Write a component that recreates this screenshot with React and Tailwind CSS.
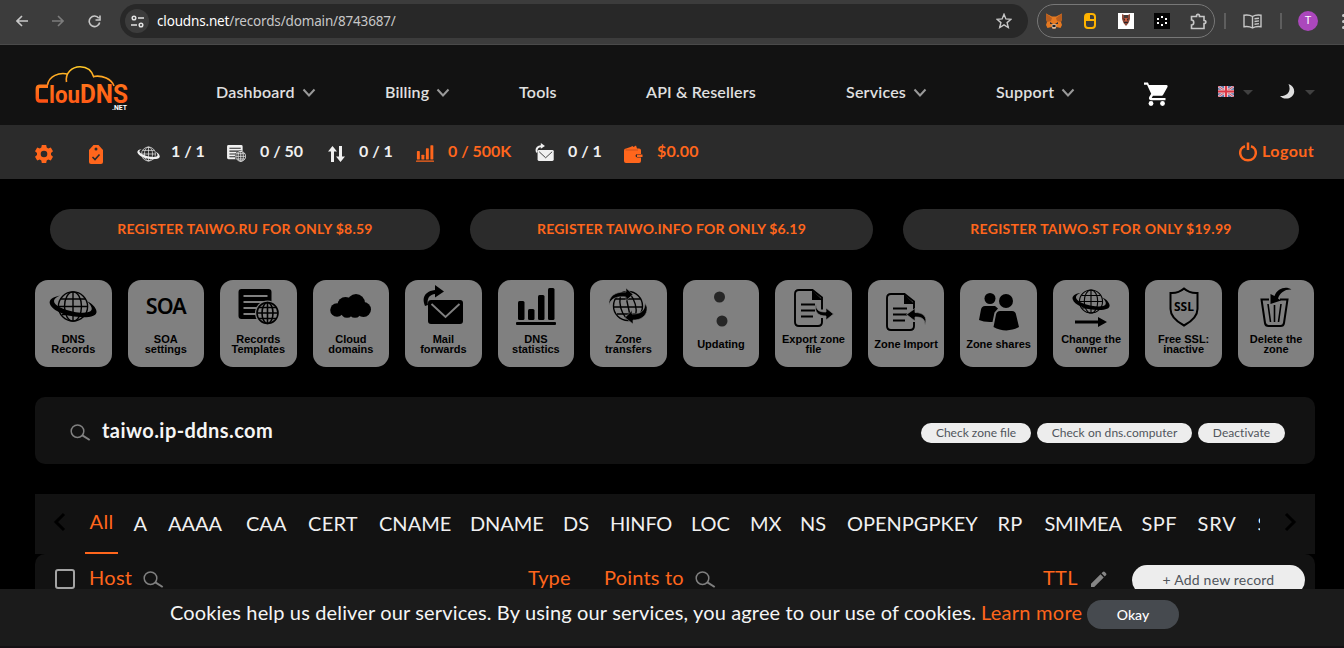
import React from "react";

function Stroke({ children, className = "", ...p }) {
  return (
    <svg className={"block shrink-0 " + className} fill="none" stroke="currentColor" {...p}>
      {children}
    </svg>
  );
}

const Chevron = () => (
  <Stroke width="14" height="10" viewBox="0 0 14 10" strokeWidth="2" className="ml-[7px] mt-px text-[#999999]">
    <path d="M1.500 1.500 7 7.500 12.500 1.500" />
  </Stroke>
);

const Caret = ({ className }) => (
  <svg width="10" height="5" viewBox="0 0 10 5" className={"block shrink-0 text-[#404040] " + className}>
    <path d="M0 0h10L5 5z" fill="currentColor" />
  </svg>
);

function Globe({ className = "", w, h }) {
  return (
    <svg viewBox="0 0 48 31" width={w} height={h} className={"block shrink-0 " + className} fill="none" stroke="currentColor">
      <g strokeWidth="1.400">
        <circle cx="24" cy="15.500" r="14.600" />
        <ellipse cx="24" cy="15.500" rx="8.500" ry="14.600" />
        <path d="M24 1v29M10 15.500h28M12 8h24M13 23.500h22" />
      </g>
      <path d="M11 4.500C3 6 0 9 .8 12.500 3 20 18 26 34 26.200c9 0 14-2 13.500-6C47 16.500 43 12.500 38.500 10.500c3 3.500 5 6 4 8.500-1.500 3-9 3.500-18 1.800C14 18.500 5 14.500 5 10c0-2 2.500-4 6-5.500z" fill="currentColor" stroke="none" />
    </svg>
  );
}

function Template({ className = "", w, h, bg = "#808080" }) {
  return (
    <svg viewBox="0 0 40 36" width={w} height={h} className={"block shrink-0 " + className}>
      <path d="M3 0h27a3 3 0 0 1 3 3v12H21v15H3a3 3 0 0 1-3-3V3a3 3 0 0 1 3-3z" fill="currentColor" />
      <path d="M5 7h24M5 13h24M5 19h15M5 25h13" stroke={bg} strokeWidth="2.200" />
      <circle cx="29" cy="24" r="12.500" fill={bg} />
      <g fill="none" stroke="currentColor" strokeWidth="1.600">
        <circle cx="29" cy="24" r="10.500" />
        <ellipse cx="29" cy="24" rx="5.500" ry="10.500" />
        <path d="M29 13.500v21M18.500 24h21M20.500 18.500h17M20.500 29.500h17" />
      </g>
    </svg>
  );
}

function Mail({ className = "", w, h, bg = "#808080" }) {
  return (
    <svg viewBox="0 0 40 39" width={w} height={h} className={"block shrink-0 " + className}>
      <path d="M2 21C-2 12 3 6 12 5V0l9 6.500-9 6V9C7 9.500 3.500 13 5 20z" fill="currentColor" />
      <rect x="5" y="15" width="35" height="24" rx="3" fill="currentColor" />
      <path d="M8.500 19 22.500 32 36.500 19" fill="none" stroke={bg} strokeWidth="1.900" />
    </svg>
  );
}

function Bars({ className = "", w, h }) {
  return (
    <svg viewBox="0 0 40 37" width={w} height={h} className={"block shrink-0 " + className} fill="currentColor">
      <rect x="2" y="13" width="6.500" height="19" rx="1.500" />
      <rect x="12" y="21" width="6.500" height="11" rx="1.500" />
      <rect x="22" y="7" width="6.500" height="25" rx="1.500" />
      <rect x="32" y="0" width="6.500" height="32" rx="1.500" />
      <rect x="0" y="34" width="40" height="3" rx="1" />
    </svg>
  );
}

const Search = ({ className }) => (
  <Stroke width="21" height="17" viewBox="0 0 21 17" strokeWidth="1.500" className={"text-[#808080] " + className}>
    <circle cx="7.500" cy="7.200" r="6.300" />
    <path d="M12 11.200 19.700 16" strokeWidth="2" />
  </Stroke>
);

function Browser() {
  return (
    <div className="flex h-[45px] w-full shrink-0 items-center border-b border-[#4a4a4a] bg-[#3c3c3c] pb-[2px] text-[#c7c7c7]">
      <Stroke width="12" height="12" viewBox="0 0 12 12" strokeWidth="1.600" className="ml-4">
        <path d="M12 6H1M6 1 1 6l5 5" />
      </Stroke>
      <Stroke width="12" height="12" viewBox="0 0 12 12" strokeWidth="1.600" className="ml-6 text-[#7c7c7c]">
        <path d="M0 6h11M6 1l5 5-5 5" />
      </Stroke>
      <Stroke width="13" height="13" viewBox="0 0 13 13" strokeWidth="1.600" className="ml-6">
        <path d="M10.800 3.200A5.300 5.300 0 1 0 11.700 7.500M12 .5V5H7.500" />
      </Stroke>
      <div className="ml-[19px] flex h-[34px] w-[908px] shrink-0 items-center rounded-full bg-[#282828] pl-[5px]">
        <div className="flex size-6 items-center justify-center rounded-full bg-[#3c3c3c]">
          <Stroke width="13" height="13" viewBox="0 0 13 13" strokeWidth="1.500" className="text-[#e3e3e3]">
            <circle cx="3" cy="3" r="1.800" />
            <path d="M7 3h6M0 10h6" />
            <circle cx="10" cy="10" r="1.800" />
          </Stroke>
        </div>
        <div className="ml-2 w-[826px] whitespace-nowrap font-['Noto_Sans',sans-serif] text-[13.500px] tracking-[-0.160px] text-[#c7c7c7]">
          <span className="text-white">cloudns.net</span>/records/domain/8743687/
        </div>
        <Stroke width="16" height="16" viewBox="0 0 16 16" strokeWidth="1.400" className="ml-[13px]">
          <path d="M8 1.300 9.900 5.900 15 6.300 11.100 9.600 12.300 14.500 8 11.900 3.700 14.500 4.900 9.600 1 6.300 6.100 5.900z" />
        </Stroke>
      </div>
      <div className="ml-[9px] flex h-[34px] w-[178px] shrink-0 items-center rounded-full border border-[#777777] pl-2">
        <svg width="16" height="16" viewBox="0 0 16 16" className="shrink-0">
          <path d="M0 .5 6 3.500h4L16 .5V6l-1 3 1 3-1.500 3-4-1L9 16H7l-1.500-2-4 1L0 12l1-3-1-3z" fill="#e67a21" />
          <path d="M0 .5 6 5 5 8 1 9 0 6zM16 .5 10 5l1 3 4 1 1-3z" fill="#b85e1f" />
          <path d="m4 9 3 2H4zM12 9l-3 2h3z" fill="#26313f" />
          <path d="m5.500 12 1-.8h3l1 .8-.8 3.500H6.300z" fill="#c9bcb0" />
          <path d="M6.500 12h3v2h-3z" fill="#222" />
        </svg>
        <svg width="12" height="16" viewBox="0 0 12 16" className="ml-[22px] shrink-0">
          <rect x="1" y="1" width="10" height="14" rx="3" fill="none" stroke="#ffb300" strokeWidth="2" />
          <path d="M1 8V3q0-2 2-2h3v5h5v2z" fill="#ffb300" />
        </svg>
        <svg width="16" height="16" viewBox="0 0 16 16" className="ml-[22px] shrink-0">
          <path d="M0 0h16v16H0z" fill="#fff" />
          <path d="M4 1l2 1h4l2-1v5l-1.500 4L8 13l-2.500-3L4 6z" fill="#8c4a3a" />
          <path d="M6 2h4v3H6z" fill="#493a37" />
          <path d="M5.500 6 7 7M10.500 6 9 7M6 9.500h4" stroke="#2b2225" />
          <path d="M7 5h2v3H7z" fill="#cf5939" />
        </svg>
        <svg width="16" height="16" viewBox="0 0 16 16" className="ml-5 shrink-0">
          <path d="M0 0h16v16H0z" fill="#050505" />
          <path d="M7 3h2v2H7zM3 5h2v2H3zm8 0h2v2h-2zM3 9h2v2H3zm8 0h2v2h-2zm-4 2h2v2H7z" fill="#fff" />
        </svg>
        <Stroke width="17" height="17" viewBox="0 0 17 17" strokeWidth="1.600" className="ml-5">
          <path d="M1.500 3.500h5C6 .6 10 .6 9.500 3.500H14v4c2.500 0 2.500 3 0 3V15.500H1.500v-3.500c3 0 3-5 0-5z" />
        </Stroke>
      </div>
      <div className="ml-[9px] h-4 w-[2px] shrink-0 bg-[#5e5e5e]" />
      <Stroke width="19" height="15" viewBox="0 0 19 15" strokeWidth="1.400" className="ml-[17px]">
        <path d="M9.500 2.500Q6 .3 1 1.200v11.500q5-.8 8.500 1.300 3.500-2.100 8.500-1.300V1.200q-5-.9-8.500 1.300zM9.500 2.500V14M11.500 4.800l4.500-.6M11.500 7.500l4.500-.6M11.500 10.200l4.500-.6" />
      </Stroke>
      <div className="ml-[18px] h-4 w-[2px] shrink-0 bg-[#5e5e5e]" />
      <div className="ml-4 flex size-5 shrink-0 items-center justify-center rounded-full bg-[#ab47bc] font-['Roboto',sans-serif] text-[11px] text-white">T</div>
      <div className="ml-[24px] flex shrink-0 flex-col gap-[3px]">
        <i className="size-[3px] rounded-full bg-[#c7c7c7]" />
        <i className="size-[3px] rounded-full bg-[#c7c7c7]" />
        <i className="size-[3px] rounded-full bg-[#c7c7c7]" />
      </div>
    </div>
  );
}

const Logo = () => (
  <svg width="94" height="46" viewBox="0 0 94 46" className="block shrink-0">
    <defs>
      <linearGradient id="cloudStroke" x1="0" y1="0" x2="0" y2="1">
        <stop offset="0" stopColor="#ffc928" />
        <stop offset="1" stopColor="#ff8a1e" />
      </linearGradient>
      <linearGradient id="wordFill" x1="0" y1="0" x2="0" y2="1">
        <stop offset="0" stopColor="#ff7a1c" />
        <stop offset="1" stopColor="#ff5214" />
      </linearGradient>
    </defs>
    <g fill="none" stroke="url(#cloudStroke)" strokeWidth="1.600">
      <path d="M12.500 20C14 11 24 7 33 9.200M31.500 17C30 8 37 1.700 45 1.700c7 0 12 3.800 14 10.800M58.500 11.500c9-1.500 18 2.500 20.500 9.500" />
    </g>
    <path d="M13 21.300H5Q2.300 21.300 2.300 24V33q0 3 2.700 3H13" fill="none" stroke="url(#wordFill)" strokeWidth="3.400" />
    <text x="14" y="37.800" textLength="31" lengthAdjust="spacingAndGlyphs" fill="url(#wordFill)" className="font-['Roboto',sans-serif] text-[23.500px] font-bold">lou</text>
    <text x="45" y="37.800" textLength="48" lengthAdjust="spacingAndGlyphs" fill="url(#wordFill)" className="font-['Roboto',sans-serif] text-[25.500px] font-bold">DNS</text>
    <text x="77" y="45" textLength="15" lengthAdjust="spacingAndGlyphs" fill="#fff" className="font-['Roboto',sans-serif] text-[7.500px] font-bold">.NET</text>
  </svg>
);

function NavItem({ label, chevron, className }) {
  return (
    <div className={"flex shrink-0 items-center whitespace-nowrap " + className}>
      <span>{label}</span>
      {chevron && <Chevron />}
    </div>
  );
}

function Header() {
  return (
    <header className="flex h-20 shrink-0 items-center bg-[#121212] pl-[35px] text-base font-semibold text-[#e0e0e0]">
      <div className="w-[181px] shrink-0 pt-[6px]"><Logo /></div>
      <div className="flex h-full items-center pt-[14px]">
        <NavItem label="Dashboard" chevron className="w-[169px] tracking-[0.200px]" />
        <NavItem label="Billing" chevron className="w-[134px] tracking-[0.120px]" />
        <NavItem label="Tools" className="w-[127px] tracking-[0.200px]" />
        <NavItem label="API & Resellers" className="w-[200px] tracking-[0.150px]" />
        <NavItem label="Services" chevron className="w-[150px] tracking-[0.200px]" />
        <NavItem label="Support" chevron className="w-[148px] tracking-[0.250px]" />
      </div>
      <svg width="24" height="24" viewBox="0 0 24 24" className="mt-[18px] shrink-0" fill="#fff">
        <path d="M0 .5v2.300h3l4.200 9-2 3.200c-.8 1.800.2 3.200 2 3.200h14.300V16H7.700l1.200-2.300h8.400c1 0 1.500-.4 2-1.300L23.500 5c.4-.9-.1-1.900-1-1.900H5L4 .5z" />
        <circle cx="7" cy="21.500" r="2.400" />
        <circle cx="18.500" cy="21.500" r="2.400" />
      </svg>
      <svg width="16" height="11" viewBox="0 0 16 12" preserveAspectRatio="none" className="ml-[50px] mt-[13px] shrink-0">
        <path d="M0 0h16v12H0z" fill="#5f74a8" />
        <path d="m0 0 16 12M16 0 0 12" stroke="#d6d0d8" strokeWidth="2.500" />
        <path d="m0 0 16 12M16 0 0 12" stroke="#d8435b" />
        <path d="M8 0v12M0 6h16" stroke="#e8c4c8" strokeWidth="4" />
        <path d="M8 0v12M0 6h16" stroke="#da3746" strokeWidth="2" />
      </svg>
      <Caret className="ml-[9px] mt-[14px]" />
      <svg width="15" height="15" viewBox="0 0 15 15" className="ml-[27px] mt-[13px] shrink-0">
        <path d="M8.500 0c8 2.500 7.500 13-1 14.500-3 .4-5.700-.6-7.500-2.500C8 12.300 11.500 6.500 8.500 0z" fill="#dedede" />
      </svg>
      <Caret className="ml-[10px] mt-[14px]" />
    </header>
  );
}

const Stat = ({ icon, text, className, textClass }) => (
  <div className={"flex h-full shrink-0 items-center " + className}>
    <div className={"flex shrink-0 items-center pt-[3px] " + textClass}>{icon}</div>
    <span className="whitespace-nowrap pb-[2px]">{text}</span>
  </div>
);

function StatusBar() {
  return (
    <div className="flex h-[54px] shrink-0 items-center bg-[#2b2b2b] pl-[34px] text-base font-bold text-[#f0f0f0]">
      <svg width="20" height="20" viewBox="0 0 20 20" className="mt-[4px] shrink-0 text-[#ff661c]">
        <path d="M7.800 1h4.400l.5 2.600 1.500.9L16.800 3.600 19 7.300l-2 1.800v1.800l2 1.800-2.200 3.700-2.600-.9-1.500.9-.5 2.600H7.800l-.5-2.600-1.500-.9-2.600.9L1 12.700l2-1.800V9.100L1 7.300l2.200-3.700 2.600.9 1.500-.9zM10 6.700a3.300 3.300 0 1 0 0 6.600 3.300 3.300 0 0 0 0-6.600z" fill="currentColor" fillRule="evenodd" />
      </svg>
      <svg width="14" height="19" viewBox="0 0 14 19" className="ml-[35px] mt-[4px] shrink-0 text-[#ff661c]">
        <path d="M4.500 0h5L14 5v12q0 2-2 2H2q-2 0-2-2V5z" fill="currentColor" />
        <circle cx="7" cy="4" r="1.500" fill="#2b2b2b" />
        <path d="m3.500 12 2.500 2.500 4.500-5" fill="none" stroke="#2b2b2b" strokeWidth="1.600" />
      </svg>
      <Stat className="ml-[34px] w-[90px]" textClass="w-[34px]" icon={<Globe w="23" h="16" />} text="1 / 1" />
      <Stat className="w-[101px]" textClass="w-[33px]" icon={<Template w="19" h="17" bg="#2b2b2b" />} text="0 / 50" />
      <Stat
        className="w-[88px]" textClass="w-[31px]"
        icon={<svg width="17" height="16" viewBox="0 0 17 16" fill="currentColor"><path d="M4.500 0 9 5.500H6V16H3V5.500H0zM12.500 16 8 10.500h3V0h3v10.500h3z" /></svg>}
        text="0 / 1"
      />
      <Stat className="w-[119px] text-[#ff661c]" textClass="w-[32px]" icon={<Bars w="18" h="17" />} text="0 / 500K" />
      <Stat className="w-[89px]" textClass="w-[33px] pb-[3px]" icon={<Mail w="19" h="18" bg="#2b2b2b" />} text="0 / 1" />
      <Stat
        className="w-[615px] tracking-[0.150px] text-[#ff661c]" textClass="w-[33px]"
        icon={<svg width="19" height="18" viewBox="0 0 19 18"><path d="M2 3.500 6.500 2l2-1 1 1L12 .5l1 3h2q2 0 2 2V9h-3.500q-2 0-2 1.700t2 1.800H17V16q0 2-2 2H2q-2 0-2-2V5.500q0-2 2-2z" fill="currentColor" /><path d="M13 9.500h5.500v2.500H13z" fill="currentColor" /><path d="M1.500 5H14" stroke="#c9501b" strokeWidth="1" /></svg>}
        text="$0.00"
      />
      <div className="flex items-center gap-[5px] whitespace-nowrap text-[#ff661c]">
        <Stroke width="18" height="20" viewBox="0 0 18 20" strokeWidth="2.500">
          <path d="M6 4.200C-1.500 6.500 0 18.300 9 18.300S19.500 6.500 12 4.200M9 .5v7.500" />
        </Stroke>
        <span className="pb-[2px] tracking-[0.450px]">Logout</span>
      </div>
    </div>
  );
}

function Tile({ label, icon, single }) {
  return (
    <div className="flex h-[87px] w-[76.500px] shrink-0 flex-col items-center rounded-[13px] bg-[#808080] text-black">
      <div className="flex h-[54px] w-full items-center justify-center">{icon}</div>
      <div className={"whitespace-pre text-center font-['Liberation_Sans',sans-serif] text-[11px] font-bold leading-[10px] " + (single ? "pt-[5px]" : "")}>{label}</div>
    </div>
  );
}

const PagePath = () => (
  <>
    <path d="M28 20.500V8.500L18.500 1H5Q1 1 1 5v28q0 4 4 4h19q4 0 4-4v-4" fill="none" stroke="currentColor" strokeWidth="1.900" />
    <path d="M18 1v10h10.500z" fill="currentColor" />
    <path d="M7 15.500h14M7 21.500h14M7 27.500h12" stroke="currentColor" strokeWidth="1.800" />
  </>
);

const tiles = [
  { label: "DNS\nRecords", icon: <Globe w="48" h="31" className="mt-[-2px]" /> },
  { label: "SOA\nsettings", icon: <span className="pb-px font-['Noto_Sans',sans-serif] text-[21.500px] font-semibold tracking-[-0.900px]">SOA</span> },
  { label: "Records\nTemplates", icon: <Template w="41" h="36" /> },
  {
    label: "Cloud\ndomains",
    icon: <svg width="41" height="24" viewBox="0 0 41 24" className="mt-[-3px]" fill="currentColor"><circle cx="7" cy="16" r="6.800" /><circle cx="15.500" cy="11" r="8" /><circle cx="26" cy="9" r="9" /><circle cx="33.500" cy="15.500" r="7.500" /><circle cx="17" cy="17.500" r="6.300" /><circle cx="25" cy="17.500" r="6.300" /></svg>,
  },
  { label: "Mail\nforwards", icon: <Mail w="40" h="39" className="mt-[-5px]" /> },
  { label: "DNS\nstatistics", icon: <Bars w="40" h="37" className="mt-[-1px]" /> },
  {
    label: "Zone\ntransfers",
    icon: (
      <svg width="40" height="36" viewBox="0 0 40 36" className="mt-[-2px]" fill="none" stroke="currentColor" strokeWidth="1.400">
        <circle cx="20" cy="18" r="14.500" />
        <ellipse cx="20" cy="18" rx="7.500" ry="14.500" transform="rotate(-15 20 18)" />
        <path d="M17 4l6 28M5.500 19h29M8 11h24M9 26h23" />
        <path d="M1 17C0 8 8 3.500 18 4V0l7 6.500-7 6V9C9 8 3 10 1 17zM39 19c1 9-7 13.500-14 13v4l-8-6.500 7-7V26c9 0 13-3 13-11z" fill="currentColor" stroke="#808080" strokeWidth=".6" />
      </svg>
    ),
  },
  { label: "Updating", single: true, icon: <svg width="20" height="36" viewBox="0 0 20 36" className="mt-[3px]" fill="#262626"><circle cx="8.500" cy="6" r="5.500" /><circle cx="11" cy="30" r="5.500" /></svg> },
  { label: "Export zone\nfile", icon: <svg width="40" height="38" viewBox="0 0 40 38" className="mt-[2px]"><PagePath /><path d="M22 15c0 7 4 8 10 8v-4l7.500 6-7.500 6v-4c-8 0-12-4-10-12z" fill="currentColor" stroke="#808080" strokeWidth=".7" /></svg> },
  { label: "Zone Import", single: true, icon: <svg width="40" height="38" viewBox="0 0 40 38" className="mt-[9px]"><PagePath /><path d="M39 32c0-7-4-8-10-8v4l-8.500-6.500L29 15.500v4c8 0 13 4 10 12.500z" fill="currentColor" stroke="#808080" strokeWidth=".7" /></svg> },
  {
    label: "Zone shares", single: true,
    icon: <svg width="40" height="38" viewBox="0 0 40 38" className="mt-[9px]" fill="currentColor"><circle cx="11" cy="5.500" r="5.500" /><path d="M6 13h10l3 2.500-3.500 4-2 9.500Q5 29.500 0 27l2-10.500q.7-3.500 4-3.500z" /><circle cx="27" cy="8" r="7" /><path d="M21 18h12q3.500 0 4 3.500L40 34c-7 4.500-18 4.500-25.500 0L17 21.500q.7-3.500 4-3.500z" /></svg>,
  },
  {
    label: "Change the\nowner",
    icon: <div className="mt-[1px] flex flex-col items-center gap-[3px]"><Globe w="38" h="25" /><svg width="32" height="10" viewBox="0 0 32 10" fill="currentColor"><path d="M0 3.500h23V0l9 5-9 5V6.500H0z" /></svg></div>,
  },
  {
    label: "Free SSL:\ninactive",
    icon: <svg width="30" height="40" viewBox="0 0 30 40" className="mt-[-1px]"><path d="M1.500 6q8 .5 13.500-4.500 5.500 5 13.500 4.500V22c0 8-6 12.500-13.500 16.500C7.500 34.500 1.500 30 1.500 22z" fill="none" stroke="currentColor" strokeWidth="2" /><text x="5" y="23.500" textLength="20" lengthAdjust="spacingAndGlyphs" fill="currentColor" className="font-['Open_Sans',sans-serif] text-[11.500px] font-bold">SSL</text></svg>,
  },
  {
    label: "Delete the\nzone",
    icon: <svg width="32" height="40" viewBox="0 0 32 40" className="mt-[-1px]"><path d="M9 12.500H1.500L5 36q.5 3 3.500 3h12q3 0 3.500-3l3.500-23.500H20" fill="none" stroke="currentColor" strokeWidth="2" /><path d="m8 17 2.500 18M14.500 18v17M21 17l-2.500 18" stroke="currentColor" strokeWidth="1.600" /><path d="M31.500 2.500C26-1 17.500 1 14.500 9L10.500 7l0 10 10.500-3.500-3-2c2-6 7-9.500 13.500-9z" fill="currentColor" /></svg>,
  },
];

const tabs = [
  ["A", "w-[34.500px]"], ["AAAA", "w-[78px]"], ["CAA", "w-[62px]"], ["CERT", "w-[71px] tracking-[0.300px]"],
  ["CNAME", "w-[91px]"], ["DNAME", "w-[93px] tracking-[-0.100px]"], ["DS", "w-[47px]"], ["HINFO", "w-[81px] tracking-[-0.250px]"],
  ["LOC", "w-[59px]"], ["MX", "w-[50px]"], ["NS", "w-[47px]"], ["OPENPGPKEY", "w-[150.500px]"],
  ["RP", "w-[47px] tracking-[0.300px]"], ["SMIMEA", "w-[97px] tracking-[-0.250px]"], ["SPF", "w-[56px] tracking-[0.500px]"], ["SRV", "w-[60px] tracking-[0.900px]"],
];

const Pill = ({ children, className }) => (
  <button className={"flex h-5 shrink-0 items-center justify-center whitespace-nowrap rounded-full bg-[#ededed] text-[12px] text-[#50555c] " + className}>{children}</button>
);

export default function App() {
  return (
    <div className="flex h-[648px] w-[1344px] flex-col overflow-hidden bg-black font-['Lato',sans-serif]">
      <Browser />
      <Header />
      <StatusBar />
      <main className="flex h-[410px] shrink-0 flex-col overflow-hidden px-[35px] pt-[30px]">
        <div className="flex h-[41px] shrink-0 gap-[30px] pl-[15px] text-[14px] font-bold text-[#ff661c]">
          <div className="flex w-[390px] items-center justify-center rounded-full bg-[#2b2b2b] pb-[2px] tracking-[0.250px]">REGISTER TAIWO.RU FOR ONLY $8.59</div>
          <div className="flex w-[403px] items-center justify-center rounded-full bg-[#2b2b2b] pb-[2px] tracking-[0.200px]">REGISTER TAIWO.INFO FOR ONLY $6.19</div>
          <div className="flex w-[396px] items-center justify-center rounded-full bg-[#2b2b2b] pb-[2px] tracking-[0.290px]">REGISTER TAIWO.ST FOR ONLY $19.99</div>
        </div>
        <div className="mt-[30px] flex w-[1279.500px] shrink-0 justify-between">
          {tiles.map((t) => <Tile key={t.label} {...t} />)}
        </div>
        <div className="mt-[30px] flex h-[67px] w-[1280px] shrink-0 items-center rounded-[10px] bg-[#121212] pl-[35px] pr-[30px]">
          <Search className="mt-[4px]" />
          <div className="ml-[11px] flex-1 pb-[2px] text-[20px] font-bold tracking-[0.430px] text-[#f5f5f5]">taiwo.ip-ddns.com</div>
          <div className="mt-[5px] flex gap-[6px]">
            <Pill className="w-[110px]">Check zone file</Pill>
            <Pill className="w-[155px] tracking-[0.050px]">Check on dns.computer</Pill>
            <Pill className="w-[87px] tracking-[0.050px]">Deactivate</Pill>
          </div>
        </div>
        <div className="mt-[30px] flex h-[60px] w-[1280px] shrink-0 bg-[#121212] text-[20px] text-[#f0f0f0]">
          <div className="flex w-[50px] shrink-0 items-center pb-[5px] pl-[18px] text-black">
            <Stroke width="13" height="20" viewBox="0 0 13 20" strokeWidth="3"><path d="M11 2 3 10l8 8" /></Stroke>
          </div>
          <div className="flex w-[1175px] shrink-0 overflow-hidden">
            <div className="flex w-[33px] shrink-0 items-center justify-center border-b-2 border-[#ff661c] pb-[4px] tracking-[0.300px] text-[#ff661c]">All</div>
            <div className="flex pb-[3px] pl-[15.500px]">
              {tabs.map(([name, w]) => (
                <div key={name} className={"flex shrink-0 items-center whitespace-nowrap " + w}>{name}</div>
              ))}
              <div className="flex w-[4px] shrink-0 items-center overflow-hidden">S</div>
            </div>
          </div>
          <div className="flex w-[55px] items-center justify-end pb-[5px] pr-[18px] text-black">
            <Stroke width="13" height="20" viewBox="0 0 13 20" strokeWidth="3"><path d="m2 2 8 8-8 8" /></Stroke>
          </div>
        </div>
        <div className="flex h-[60px] w-[1280px] shrink-0 items-start rounded-t-[10px] bg-[#121212] pl-5 text-[20px] text-[#ff661c]">
          <div className="mt-[15px] size-5 shrink-0 rounded-[3px] border-2 border-[#a3a3a3]" />
          <div className="ml-[14px] mt-[8px] w-[54px] tracking-[0.300px]">Host</div>
          <Search className="mt-[17px]" />
          <div className="ml-[364px] mt-[8px] w-[76px] tracking-[0.100px]">Type</div>
          <div className="mt-[8px] w-[91px] whitespace-nowrap tracking-[0.200px]">Points to</div>
          <Search className="mt-[17px]" />
          <div className="ml-[327px] mt-[8px] w-[47px] tracking-[0.300px]">TTL</div>
          <svg width="17" height="17" viewBox="0 0 17 17" className="mt-[17px] shrink-0" fill="#858585"><path d="M1 12.800 10.500 3.300l3.200 3.200L4.200 16H1zM11.500 2.300l1.300-1.300q1-1 2 0l1.200 1.200q1 1 0 2l-1.300 1.300z" /></svg>
          <button className="ml-[25px] mt-[11px] flex h-[30px] w-[173px] items-center justify-center rounded-full bg-[#ededed] pb-px text-[14px] tracking-[0.200px] text-[#50555c]">+ Add new record</button>
        </div>
      </main>
      <footer className="flex h-[59px] shrink-0 items-start border-b-2 border-[#141114] bg-[#1b1b1b] pl-[170px] text-[20px] text-[#f5f5f5]">
        <div className="mt-[8px] w-[811px] shrink-0 whitespace-nowrap tracking-[0.148px]">Cookies help us deliver our services. By using our services, you agree to our use of cookies.</div>
        <div className="mt-[8px] w-[106px] shrink-0 whitespace-nowrap tracking-[0.250px] text-[#ff661c]">Learn more</div>
        <button className="mt-[11px] flex h-[29px] w-[92px] items-center justify-center rounded-full bg-[#464a4f] pb-px text-[14px] font-medium text-white">Okay</button>
      </footer>
    </div>
  );
}
